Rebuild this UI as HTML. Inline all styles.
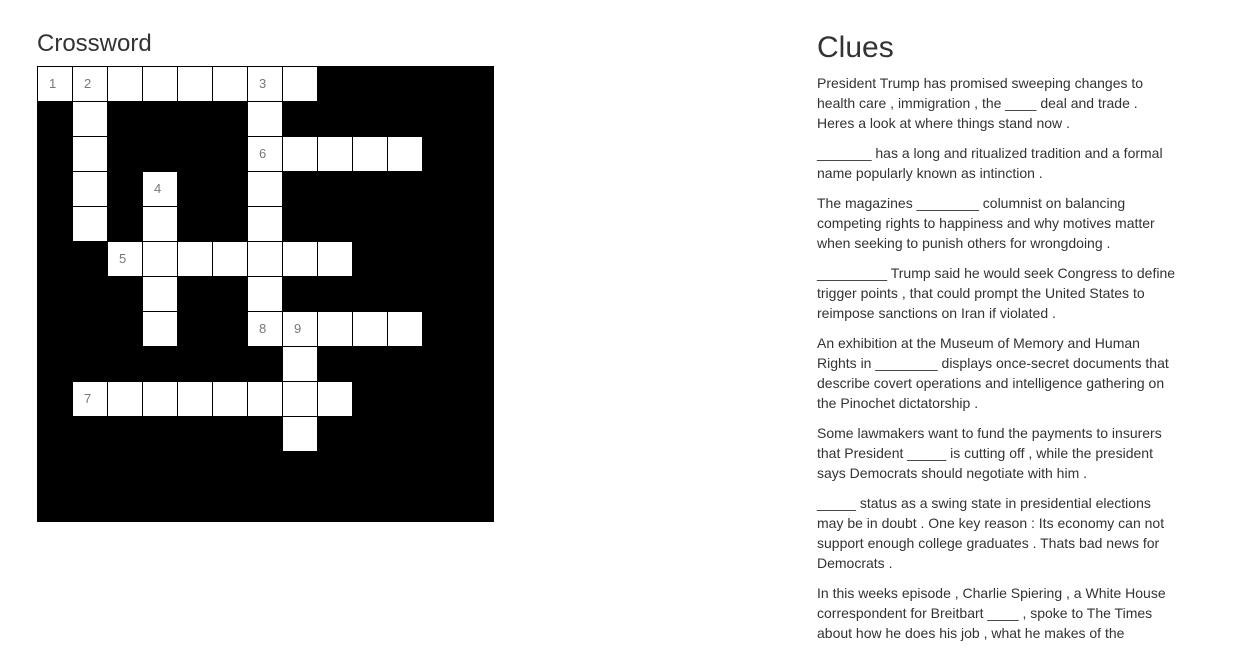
<!DOCTYPE html>
<html><head><meta charset="utf-8"><style>
body{margin:0;width:1255px;height:645px;overflow:hidden;background:#fff;font-family:"Liberation Sans",sans-serif;color:#333;position:relative}
h2{position:absolute;left:37px;top:29px;margin:0;font-size:24px;font-weight:normal;line-height:30px}
#g{position:absolute;left:37px;top:66px;width:457px;height:456px;background:#000}
.c{position:absolute;width:34px;height:34px;background:#fff;font-size:13px;color:#777;line-height:34px;text-indent:11px}
#cl{position:absolute;left:817px;top:29px;width:360px}
#cl h1{margin:0 0 6px;font-size:30px;font-weight:normal;line-height:38px}
#cl p{margin:0 0 10px;font-size:14px;line-height:20px}
</style></head><body>
<h2>Crossword</h2>
<div id="g"></div>
<div id="cl"><h1>Clues</h1>
<p>President Trump has promised sweeping changes to health care , immigration , the ____ deal and trade .<br>Heres a look at where things stand now .</p>
<p>_______ has a long and ritualized tradition and a formal name popularly known as intinction .</p>
<p>The magazines ________ columnist on balancing competing rights to happiness and why motives matter when seeking to punish others for wrongdoing .</p>
<p>_________ Trump said he would seek Congress to define trigger points , that could prompt the United States to reimpose sanctions on Iran if violated .</p>
<p>An exhibition at the Museum of Memory and Human Rights in ________ displays once-secret documents that describe covert operations and intelligence gathering on the Pinochet dictatorship .</p>
<p>Some lawmakers want to fund the payments to insurers that President _____ is cutting off , while the president says Democrats should negotiate with him .</p>
<p>_____ status as a swing state in presidential elections<br>may be in doubt . One key reason : Its economy can not support enough college graduates . Thats bad news for Democrats .</p>
<p>In this weeks episode , Charlie Spiering , a White House correspondent for Breitbart ____ , spoke to The Times about how he does his job , what he makes of the</p>
</div>
<script>
var cells=[[0,0,1],[0,1,2],[0,2],[0,3],[0,4],[0,5],[0,6,3],[0,7],
[1,1],[1,6],[2,1],[2,6,6],[2,7],[2,8],[2,9],[2,10],
[3,1],[3,3,4],[3,6],[4,1],[4,3],[4,6],
[5,2,5],[5,3],[5,4],[5,5],[5,6],[5,7],[5,8],
[6,3],[6,6],[7,3],[7,6,8],[7,7,9],[7,8],[7,9],[7,10],
[8,7],[9,1,7],[9,2],[9,3],[9,4],[9,5],[9,6],[9,7],[9,8],[10,7]];
var g=document.getElementById('g'),h='';
cells.forEach(function(c){h+='<div class="c" style="left:'+(1+c[1]*35)+'px;top:'+(1+c[0]*35)+'px">'+(c[2]||'')+'</div>';});
g.innerHTML=h;
</script>
</body></html>
